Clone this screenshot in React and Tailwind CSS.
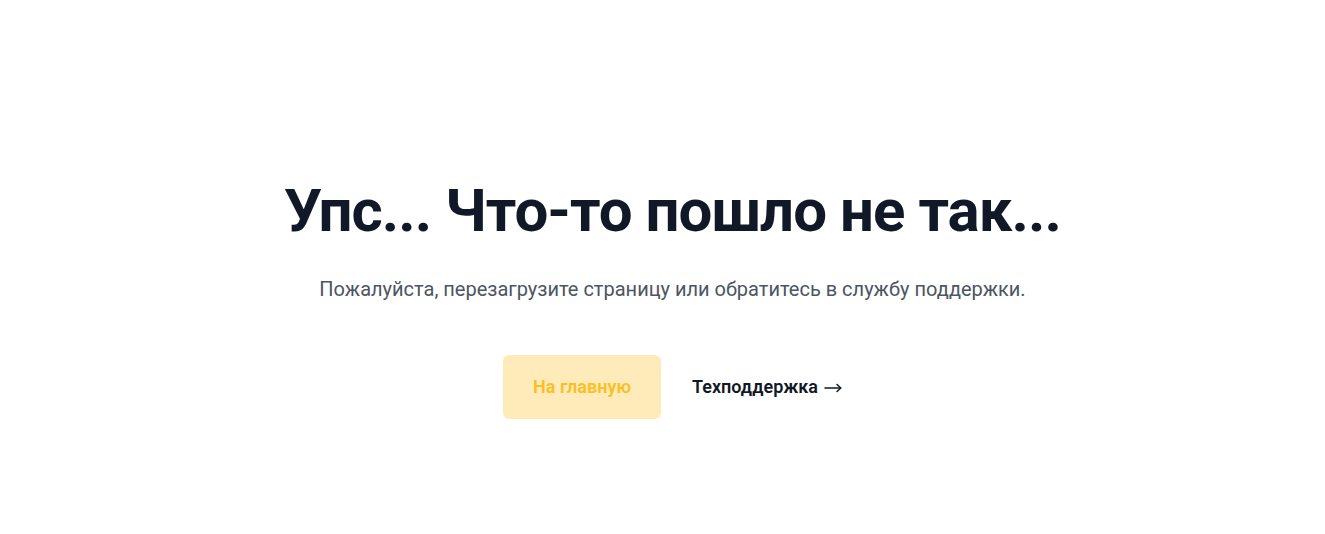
export default function App() {
  return (
    <main
      className="min-h-[534px] bg-white flex flex-col items-center pt-[181px] pl-5 text-center"
      style={{ fontFamily: "Roboto, 'Noto Sans', sans-serif" }}
    >
      <h1 className="text-[60px] leading-none font-bold tracking-[-0.016em] text-[#111827]">
        Упс... Что-то пошло не так...
      </h1>
      <p className="mt-[34px] text-xl leading-7 text-[#4b5563]">
        Пожалуйста, перезагрузите страницу или обратитесь в службу поддержки.
      </p>
      <div className="mt-[52px] flex items-center justify-center gap-x-[31px]">
        <a className="rounded-md bg-[#feebb9] px-[30px] py-5 text-lg leading-6 font-semibold text-[#fbbf24]">
          На главную
        </a>
        <a className="flex items-center text-lg leading-6 font-semibold text-[#111827]">
          <span>Техподдержка</span>
          <svg
            className="ml-[6px] mt-[1px]"
            width="18"
            height="10"
            viewBox="0 0 18 10"
            fill="none"
            stroke="#111827"
            strokeWidth="1.5"
            strokeLinecap="round"
            strokeLinejoin="round"
          >
            <path d="M1 5H16.5" />
            <path d="M13 1.5L16.8 5L13 8.5" />
          </svg>
        </a>
      </div>
    </main>
  );
}
